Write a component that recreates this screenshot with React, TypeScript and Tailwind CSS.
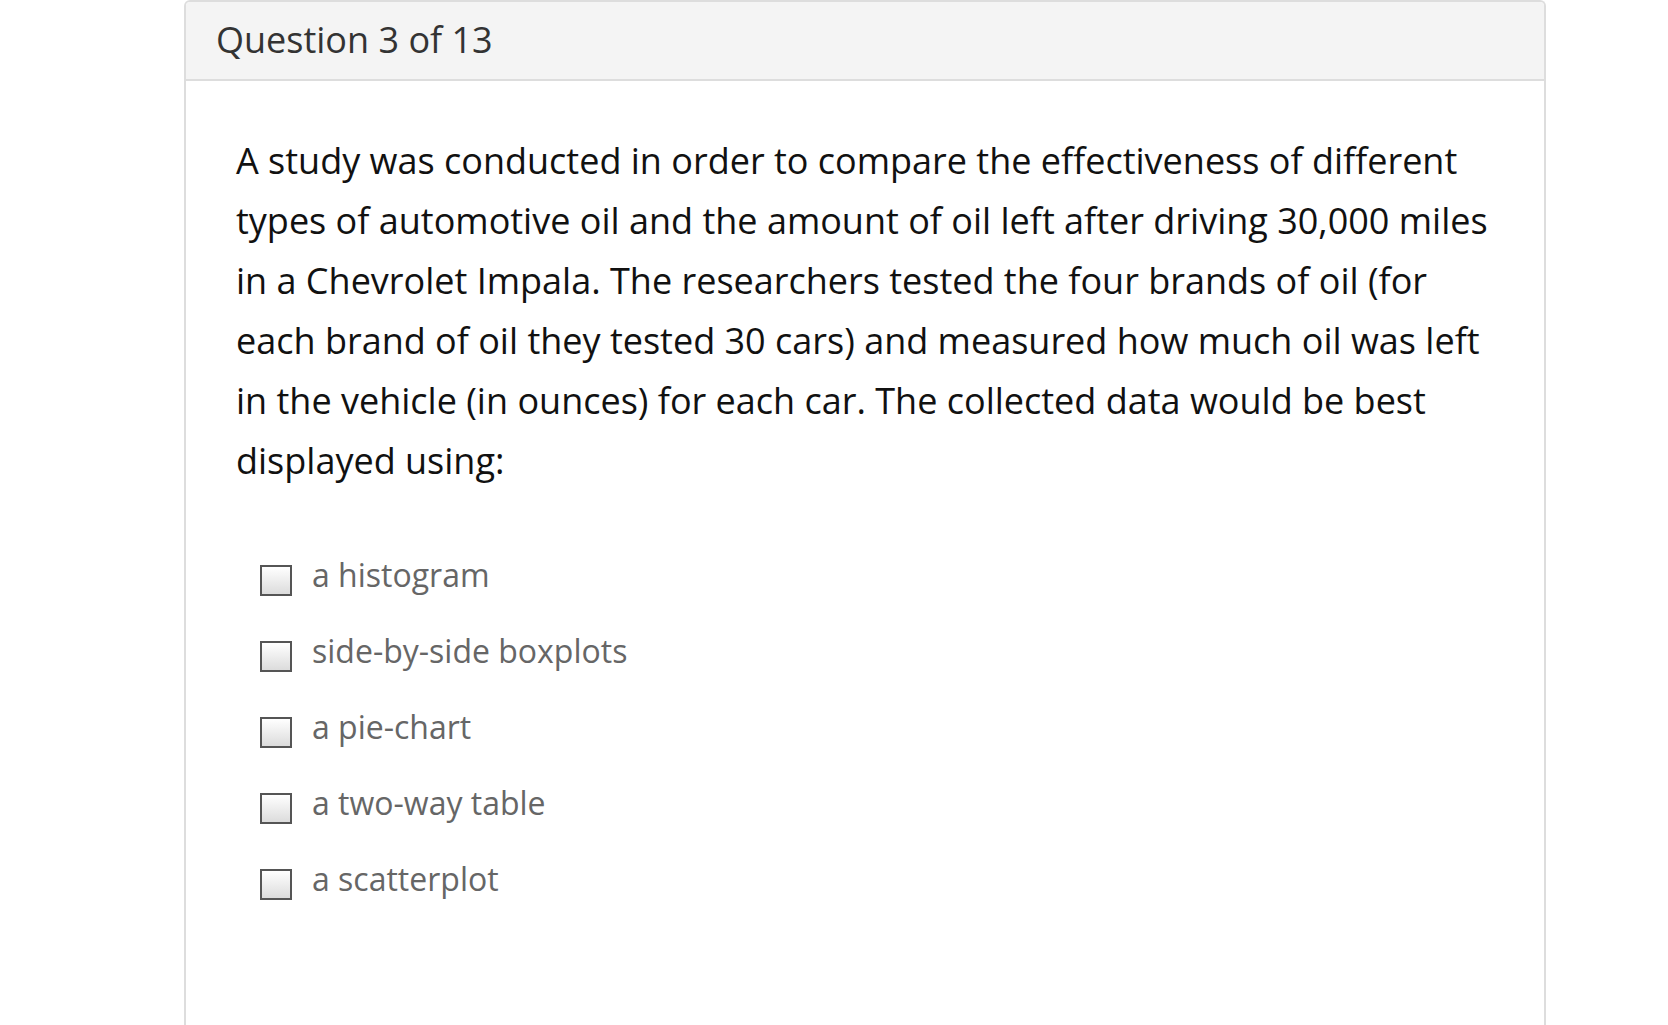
const options = [
  "a histogram",
  "side-by-side boxplots",
  "a pie-chart",
  "a two-way table",
  "a scatterplot",
];

export default function App() {
  return (
    <div className="min-h-screen bg-white font-['Open_Sans',sans-serif]">
      <div className="ml-[184px] w-[1362px] h-[1040px] border-2 border-b-0 border-[#dddddd] rounded-t-md overflow-hidden">
        <div className="h-[79px] flex items-center bg-[#f4f4f4] border-b-2 border-[#dddddd] pl-[30px]">
          <span className="-mt-[2px] text-[36px] text-[#333333]">Question 3 of 13</span>
        </div>
        <div className="pl-[50px] pr-[48px] pt-[50px]">
          <p className="text-[36px] leading-[60px] text-[#111111]">
            A study was conducted in order to compare the effectiveness of different types of automotive oil
            and the amount of oil left after driving 30,000 miles in a Chevrolet Impala. The researchers tested
            the four brands of oil (for each brand of oil they tested 30 cars) and measured how much oil was left
            in the vehicle (in ounces) for each car. The collected data would be best displayed using:
          </p>
          <div className="mt-[46px] pl-[24px]">
            {options.map((o) => (
              <label key={o} className="h-[76px] flex items-center gap-[20px]">
                <span className="w-[32px] h-[31px] mt-[10px] border-2 border-[#555555] bg-gradient-to-b from-white to-[#dcdcdc]" />
                <span className="text-[32px] text-[#666666]">{o}</span>
              </label>
            ))}
          </div>
        </div>
      </div>
    </div>
  );
}
